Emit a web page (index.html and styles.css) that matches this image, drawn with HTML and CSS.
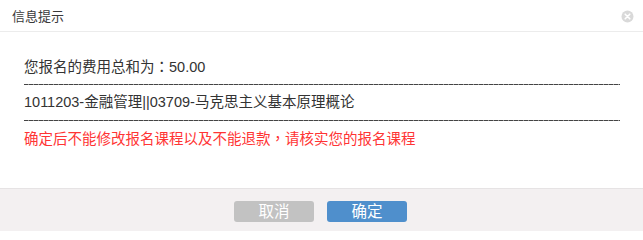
FILE: index.html
```html
<!DOCTYPE html>
<html lang="zh-CN">
<head>
<meta charset="utf-8">
<link rel="stylesheet" href="styles.css">
</head>
<body>
<div class="dialog">
  <div class="title-bar">
    <span class="title">信息提示</span>
    <span class="close" aria-label="关闭">
      <svg width="13" height="13" viewBox="0 0 13 13">
        <circle cx="6.5" cy="6.5" r="6" fill="#d9d9d9"/>
        <path d="M4.2 4.2 L8.8 8.8 M8.8 4.2 L4.2 8.8" stroke="#fff" stroke-width="1.6" stroke-linecap="round"/>
      </svg>
    </span>
  </div>
  <div class="content">
    <div class="line">您报名的费用总和为<span class="punct" lang="zh-TW">：</span>50.00</div>
    <div class="dash"></div>
    <div class="line">1011203-金融管理||03709-马克思主义基本原理概论</div>
    <div class="dash"></div>
    <div class="line warn">确定后不能修改报名课程以及不能退款<span class="punct" lang="zh-TW">，</span>请核实您的报名课程</div>
  </div>
  <div class="footer">
    <button class="btn cancel">取消</button>
    <button class="btn ok">确定</button>
  </div>
</div>
</body>
</html>
```

FILE: styles.css
```css
html, body {
  margin: 0;
  padding: 0;
  background: #fff;
}
body {
  font-family: "Liberation Sans", "Noto Sans CJK SC", sans-serif;
  color: #333;
}
.dialog {
  width: 643px;
  height: 231px;
  display: flex;
  flex-direction: column;
}
.title-bar {
  height: 32px;
  border-bottom: 1px solid #ececec;
  display: flex;
  align-items: center;
  justify-content: space-between;
  padding: 0 9px 0 12px;
  box-sizing: border-box;
}
.title {
  font-size: 13px;
  color: #3a3a3a;
}
.close {
  display: flex;
  margin-top: 1px;
}
.content {
  flex: 1;
  padding: 25px 23px 0 24px;
}
.line {
  font-size: 14.5px;
  line-height: 18px;
  height: 18px;
  white-space: nowrap;
}
.punct {
  font-family: "Noto Sans CJK TC", "Noto Sans CJK SC", sans-serif;
}
.warn {
  color: #ff3434;
}
.dash {
  height: 1px;
  margin: 9px 0 8px;
  background: repeating-linear-gradient(90deg, #444 0 4px, #999 4px 5px);
}
.footer {
  height: 43px;
  box-sizing: border-box;
  border-top: 1px solid #e6e3e4;
  background: #f3f0f1;
  display: flex;
  justify-content: center;
  align-items: flex-start;
  gap: 13px;
  padding: 12px 2px 0 0;
}
.btn {
  width: 80px;
  height: 21px;
  border: none;
  border-radius: 3px;
  color: #fff;
  font-family: "Liberation Sans", "Noto Sans CJK SC", sans-serif;
  font-size: 15.5px;
  line-height: 21px;
  padding: 0;
}
.cancel {
  background: #c2c2c2;
}
.ok {
  background: #4f8fcc;
}
```
